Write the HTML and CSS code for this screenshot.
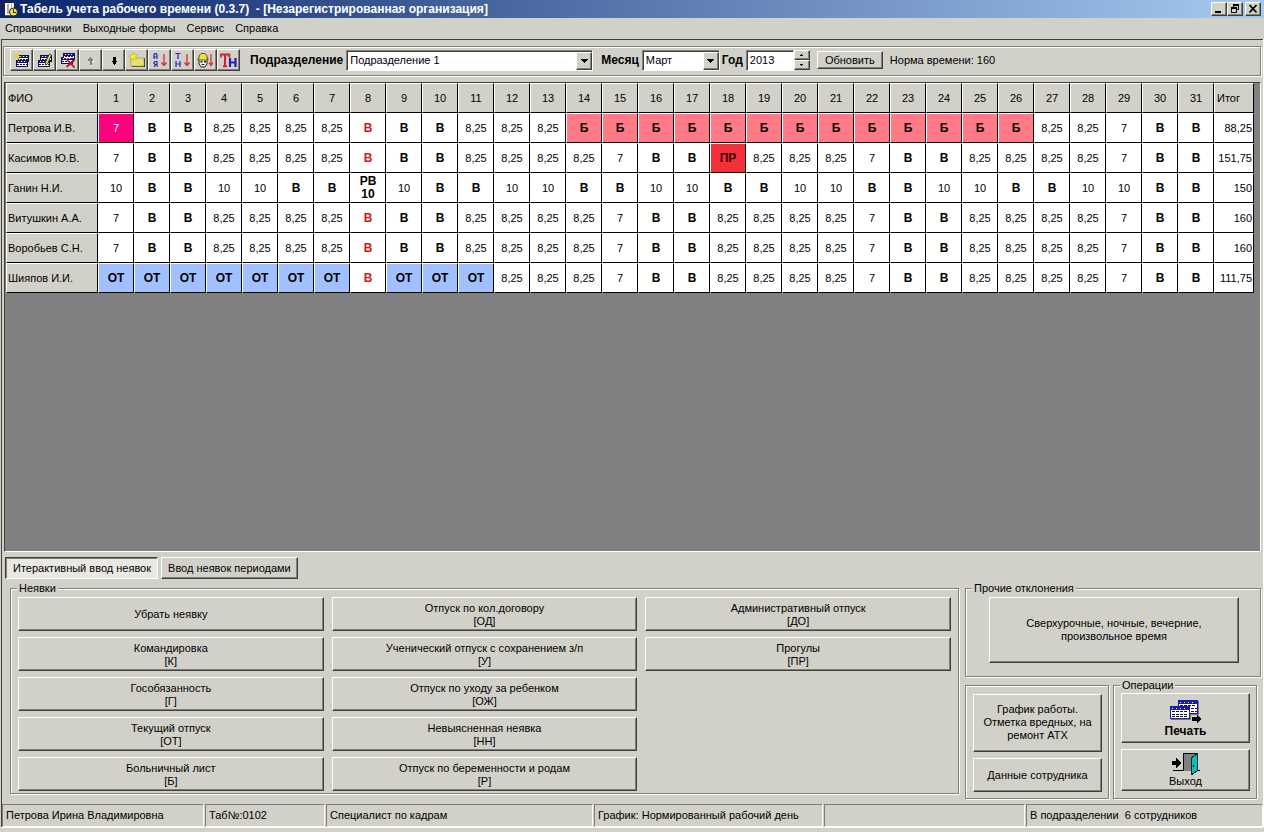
FILE: index.html
```
<!DOCTYPE html>
<html lang="ru">
<head>
<meta charset="utf-8">
<title>Табель учета рабочего времени</title>
<link rel="stylesheet" href="styles.css">
</head>
<body>
<header class="titlebar">
  <svg class="app-icon" viewBox="0 0 16 16" shape-rendering="crispEdges"><path fill="#fff" d="M3 2h9v12H3z"/><path fill="#223" d="M1 2h2v12H1zM3 1h7v1H3z"/><path fill="#aab" d="M5 3h2v10H5zM9 3h1v5H9z"/><path fill="#555" d="M3 14h6v1H3z"/><circle cx="11.5" cy="11" r="4" fill="#f4ea3c" stroke="#222" shape-rendering="auto"/><path fill="#222" d="M11 8h1v4h-1zM11 11h3v1h-3z"/></svg>
  <h1 class="title">Табель учета рабочего времени (0.3.7) &nbsp;- [Незарегистрированная организация]</h1>
  <div class="win-buttons">
    <button class="bevel win" aria-label="Свернуть"><svg viewBox="0 0 12 10" shape-rendering="crispEdges"><path d="M2 7h6v2H2z"/></svg></button>
    <button class="bevel win" aria-label="Восстановить"><svg viewBox="0 0 12 10" shape-rendering="crispEdges"><path d="M4 0h6v6H8V5h1V2H5v1H4zM2 3h6v6H2zM3 5v3h4V5z" fill-rule="evenodd"/></svg></button>
    <button class="bevel win close" aria-label="Закрыть"><svg viewBox="0 0 12 10"><path d="M2.5 1l7 7.500M9.500 1l-7 7.500" stroke="#000" stroke-width="1.800"/></svg></button>
  </div>
</header>
<nav class="menu">
  <a href="#">Справочники</a><a href="#">Выходные формы</a><a href="#">Сервис</a><a href="#">Справка</a>
</nav>
<main class="workspace">
  <form class="toolbar">
    <div class="tools">
      <button type="button" class="bevel tool" aria-label="Добавить"><svg viewBox="0 0 16 16" shape-rendering="crispEdges"><path fill="#101050" d="M4 3h11v7H4zM2 8h12v7H2z"/><path fill="#fff" d="M5 6h9v2H5zM3 11h10v3H3z"/><path fill="#2a2ad0" d="M5 4h9v1H5zM3 9h10v1H3z"/><path stroke="#fff" stroke-dasharray="1 2" d="M6 4.500h8M4 9.500h9"/><path stroke="#112" stroke-dasharray="2 1" d="M3 12.500h10M6 7.500h8"/><path stroke="#e0d43a" d="M3.500 1v6M0 4.500h7M1 2l5 5M6 2L1 7"/></svg></button>
      <button type="button" class="bevel tool" aria-label="Изменить"><svg viewBox="0 0 16 16" shape-rendering="crispEdges"><path fill="#101050" d="M3 3h12v7H3zM1 8h12v7H1z"/><path fill="#fff" d="M4 6h10v2H4zM2 11h10v3H2z"/><path fill="#2a2ad0" d="M4 4h10v1H4zM2 9h10v1H2z"/><path stroke="#fff" stroke-dasharray="1 2" d="M5 4.500h8M3 9.500h9"/><path stroke="#112" stroke-dasharray="2 1" d="M2 12.500h10M5 7.500h8"/><path shape-rendering="auto" fill="#f0e468" stroke="#222" stroke-width=".8" d="M13 2l2 1-4 9-2 1v-3z"/></svg></button>
      <button type="button" class="bevel tool" aria-label="Удалить"><svg viewBox="0 0 16 16" shape-rendering="crispEdges"><path fill="#101050" d="M3 1h12v7H3zM1 5h12v7H1z"/><path fill="#fff" d="M4 4h10v2H4zM2 8h10v3H2z"/><path fill="#2a2ad0" d="M4 2h10v1H4zM2 6h10v1H2z"/><path stroke="#fff" stroke-dasharray="1 2" d="M5 2.500h8M3 6.500h9"/><path stroke="#112" stroke-dasharray="2 1" d="M2 9.500h10M5 4.500h8"/><path shape-rendering="auto" stroke="#b8141e" stroke-width="1.800" d="M7 7l8 8.500M15 8l-8 7"/></svg></button>
      <button type="button" class="bevel tool" aria-label="Вверх" disabled><svg viewBox="0 0 16 16" shape-rendering="crispEdges"><path fill="#fff" d="M8 6h1v1h1v1h1v2H9v4H8z"/><path fill="#808080" d="M7 5h1v1h1v1h1v2H9v4H7V9H5V7h1V6h1z"/></svg></button>
      <button type="button" class="bevel tool" aria-label="Вниз"><svg viewBox="0 0 16 16" shape-rendering="crispEdges"><path d="M7 5h3v4h1v1h-1v2H9v1H8v-1H7v-2H6V9h1z"/></svg></button>
      <button type="button" class="bevel tool" aria-label="Папка"><svg viewBox="0 0 18 16"><path fill="#222" d="M4 14h13V6h1v9.500H4z"/><path fill="#e6e274" stroke="#8a8a30" stroke-width=".6" d="M3 6h5l2-1 1 1h6v8.500H3z"/><path fill="#f6f02a" stroke="#a8a020" stroke-width=".5" d="M5 0l1.500 2.500L10 2 8 4.500 9 8 5.500 6.500 3 8.500V5.500L.5 4 4 3z"/></svg></button>
      <button type="button" class="bevel tool" aria-label="Сортировка по алфавиту"><svg viewBox="0 0 16 16"><g fill="none" stroke="#2424c0" stroke-width="1.200"><path d="M2.500 7V2.500l1-1h1l1 1V7M2.500 5h3M5.500 15V9.500H3.500l-1 1v1l1 1h2M4 12.500L2.500 15"/></g><path d="M12.500 2v11.500M10 10.500l2.500 3 2.500-3" fill="none" stroke="#d23030" stroke-width="1.300"/></svg></button>
      <button type="button" class="bevel tool" aria-label="Сортировка по табельному номеру"><svg viewBox="0 0 16 16"><g fill="none" stroke="#2424c0" stroke-width="1.200"><path d="M1 1.500h5M3.500 1.500V7M1.500 9v6M5.500 9v6M1.500 12h4"/></g><path d="M12.500 2v11.500M10 10.500l2.500 3 2.500-3" fill="none" stroke="#d23030" stroke-width="1.300"/></svg></button>
      <button type="button" class="bevel tool" aria-label="Сортировка по должности"><svg viewBox="0 0 16 16"><path fill="#f4f0e0" stroke="#222" d="M1.500 7.500h8V12l-2 3h-4l-2-3z"/><path fill="#f4e52c" stroke="#443" stroke-width=".9" d="M1.500 6.500V4l2-2.500h4l2 2.500v2.500h1v1.500H.5V6.500z"/><path fill="#222" d="M3 9h2v1.500H3zM6.500 9h2v1.500h-2zM4 12h3v1H4z"/><path d="M13.500 2v11.500M11.500 10.500l2 3 2-3" fill="none" stroke="#d23030" stroke-width="1.300"/></svg></button>
      <button type="button" class="bevel tool" aria-label="Табельный номер"><svg viewBox="0 0 17 16"><path d="M0 2.500h10M5 2v12.500M.7 2v3.500M9.300 2v3.500M3 14.200h4" fill="none" stroke="#d8202c" stroke-width="2"/><path d="M10 6v9M15.500 6v9M10 10.500h5.500" fill="none" stroke="#2020c0" stroke-width="2.200"/></svg></button>
    </div>
    <label class="field dept" for="dept">Подразделение</label>
    <span class="combo wide"><select id="dept"><option>Подразделение 1</option></select><span class="bevel arrow"><svg viewBox="0 0 7 4" shape-rendering="crispEdges"><path d="M0 0h7v1H6v1H5v1H4v1H3V3H2V2H1V1H0z"/></svg></span></span>
    <label class="field month" for="month">Месяц</label>
    <span class="combo"><select id="month"><option>Март</option></select><span class="bevel arrow"><svg viewBox="0 0 7 4" shape-rendering="crispEdges"><path d="M0 0h7v1H6v1H5v1H4v1H3V3H2V2H1V1H0z"/></svg></span></span>
    <label class="field year" for="year">Год</label>
    <input class="year-box" id="year" type="text" value="2013">
    <span class="spin"><button type="button" class="bevel" aria-label="Больше"><svg viewBox="0 0 3 2" shape-rendering="crispEdges"><path d="M1 0h1v1h1v1H0V1h1z"/></svg></button><button type="button" class="bevel" aria-label="Меньше"><svg viewBox="0 0 3 2" shape-rendering="crispEdges"><path d="M0 0h3v1H2v1H1V1H0z"/></svg></button></span>
    <button type="button" class="bevel refresh">Обновить</button>
    <span>Норма времени: 160</span>
  </form>

  <div class="grid">
    <table>
      <colgroup><col class="c-name"><col class="c-day" span="31"><col class="c-sum"></colgroup>
      <thead><tr><th>ФИО</th><th>1</th><th>2</th><th>3</th><th>4</th><th>5</th><th>6</th><th>7</th><th>8</th><th>9</th><th>10</th><th>11</th><th>12</th><th>13</th><th>14</th><th>15</th><th>16</th><th>17</th><th>18</th><th>19</th><th>20</th><th>21</th><th>22</th><th>23</th><th>24</th><th>25</th><th>26</th><th>27</th><th>28</th><th>29</th><th>30</th><th>31</th><th class="sum">Итог</th></tr></thead>
      <tbody>
        <tr><th>Петрова И.В.</th><td class="selected">7</td><td><b>В</b></td><td><b>В</b></td><td>8,25</td><td>8,25</td><td>8,25</td><td>8,25</td><td class="holiday">В</td><td><b>В</b></td><td><b>В</b></td><td>8,25</td><td>8,25</td><td>8,25</td><td class="sick">Б</td><td class="sick">Б</td><td class="sick">Б</td><td class="sick">Б</td><td class="sick">Б</td><td class="sick">Б</td><td class="sick">Б</td><td class="sick">Б</td><td class="sick">Б</td><td class="sick">Б</td><td class="sick">Б</td><td class="sick">Б</td><td class="sick">Б</td><td>8,25</td><td>8,25</td><td>7</td><td><b>В</b></td><td><b>В</b></td><td>88,25</td></tr>
        <tr><th>Касимов Ю.В.</th><td>7</td><td><b>В</b></td><td><b>В</b></td><td>8,25</td><td>8,25</td><td>8,25</td><td>8,25</td><td class="holiday">В</td><td><b>В</b></td><td><b>В</b></td><td>8,25</td><td>8,25</td><td>8,25</td><td>8,25</td><td>7</td><td><b>В</b></td><td><b>В</b></td><td class="absent">ПР</td><td>8,25</td><td>8,25</td><td>8,25</td><td>7</td><td><b>В</b></td><td><b>В</b></td><td>8,25</td><td>8,25</td><td>8,25</td><td>8,25</td><td>7</td><td><b>В</b></td><td><b>В</b></td><td>151,75</td></tr>
        <tr><th>Ганин Н.И.</th><td>10</td><td><b>В</b></td><td><b>В</b></td><td>10</td><td>10</td><td><b>В</b></td><td><b>В</b></td><td><b>РВ<br>10</b></td><td>10</td><td><b>В</b></td><td><b>В</b></td><td>10</td><td>10</td><td><b>В</b></td><td><b>В</b></td><td>10</td><td>10</td><td><b>В</b></td><td><b>В</b></td><td>10</td><td>10</td><td><b>В</b></td><td><b>В</b></td><td>10</td><td>10</td><td><b>В</b></td><td><b>В</b></td><td>10</td><td>10</td><td><b>В</b></td><td><b>В</b></td><td>150</td></tr>
        <tr><th>Витушкин А.А.</th><td>7</td><td><b>В</b></td><td><b>В</b></td><td>8,25</td><td>8,25</td><td>8,25</td><td>8,25</td><td class="holiday">В</td><td><b>В</b></td><td><b>В</b></td><td>8,25</td><td>8,25</td><td>8,25</td><td>8,25</td><td>7</td><td><b>В</b></td><td><b>В</b></td><td>8,25</td><td>8,25</td><td>8,25</td><td>8,25</td><td>7</td><td><b>В</b></td><td><b>В</b></td><td>8,25</td><td>8,25</td><td>8,25</td><td>8,25</td><td>7</td><td><b>В</b></td><td><b>В</b></td><td>160</td></tr>
        <tr><th>Воробьев С.Н.</th><td>7</td><td><b>В</b></td><td><b>В</b></td><td>8,25</td><td>8,25</td><td>8,25</td><td>8,25</td><td class="holiday">В</td><td><b>В</b></td><td><b>В</b></td><td>8,25</td><td>8,25</td><td>8,25</td><td>8,25</td><td>7</td><td><b>В</b></td><td><b>В</b></td><td>8,25</td><td>8,25</td><td>8,25</td><td>8,25</td><td>7</td><td><b>В</b></td><td><b>В</b></td><td>8,25</td><td>8,25</td><td>8,25</td><td>8,25</td><td>7</td><td><b>В</b></td><td><b>В</b></td><td>160</td></tr>
        <tr><th>Шияпов И.И.</th><td class="leave">ОТ</td><td class="leave">ОТ</td><td class="leave">ОТ</td><td class="leave">ОТ</td><td class="leave">ОТ</td><td class="leave">ОТ</td><td class="leave">ОТ</td><td class="holiday">В</td><td class="leave">ОТ</td><td class="leave">ОТ</td><td class="leave">ОТ</td><td>8,25</td><td>8,25</td><td>8,25</td><td>7</td><td><b>В</b></td><td><b>В</b></td><td>8,25</td><td>8,25</td><td>8,25</td><td>8,25</td><td>7</td><td><b>В</b></td><td><b>В</b></td><td>8,25</td><td>8,25</td><td>8,25</td><td>8,25</td><td>7</td><td><b>В</b></td><td><b>В</b></td><td>111,75</td></tr>
      </tbody>
    </table>
  </div>

  <div class="tabs">
    <button class="bevel tab active">Итерактивный ввод неявок</button>
    <button class="bevel tab">Ввод неявок периодами</button>
  </div>

  <div class="panels">
    <fieldset class="group absences">
      <legend>Неявки</legend>
      <div class="absence-grid">
        <button class="bevel">Убрать неявку</button>
        <button class="bevel">Командировка<br>[К]</button>
        <button class="bevel">Гособязанность<br>[Г]</button>
        <button class="bevel">Текущий отпуск<br>[ОТ]</button>
        <button class="bevel">Больничный лист<br>[Б]</button>
        <button class="bevel">Отпуск по кол.договору<br>[ОД]</button>
        <button class="bevel">Ученический отпуск с сохранением з/п<br>[У]</button>
        <button class="bevel">Отпуск по уходу за ребенком<br>[ОЖ]</button>
        <button class="bevel">Невыясненная неявка<br>[НН]</button>
        <button class="bevel">Отпуск по беременности и родам<br>[Р]</button>
        <button class="bevel">Административный отпуск<br>[ДО]</button>
        <button class="bevel">Прогулы<br>[ПР]</button>
      </div>
    </fieldset>
    <div class="side">
      <fieldset class="group other">
        <legend>Прочие отклонения</legend>
        <button class="bevel">Сверхурочные, ночные, вечерние,<br>произвольное время</button>
      </fieldset>
      <div class="side-row">
        <div class="group staff">
          <button class="bevel schedule">График работы.<br>Отметка вредных, на<br>ремонт АТХ</button>
          <button class="bevel">Данные сотрудника</button>
        </div>
        <fieldset class="group ops">
          <legend>Операции</legend>
          <div class="ops-list">
            <button class="bevel op print"><svg viewBox="0 0 32 24" shape-rendering="crispEdges"><path d="M9 2h20v14H9zM1 8h20v13H1z" fill="#777"/><path d="M8 1h20v14H8z" fill="#1a1ab0"/><path d="M9 5h18v9H9z" fill="#fff"/><path d="M0 7h20v13H0z" fill="#1a1ab0"/><path d="M1 11h18v8H1z" fill="#fff"/><path d="M10 6.500h16M21 9.500h6M21 12.500h6M2 12.500h16M2 15.500h16M2 17.500h16" stroke="#112" stroke-dasharray="3 1"/><path d="M2 9.500h16M10 3.500h16" stroke="#fff" stroke-dasharray="1 3"/><path d="M22 18h5v-2l5 4-5 4v-2h-5z"/></svg><strong>Печать</strong></button>
            <button class="bevel op exit"><svg viewBox="0 0 28 22" shape-rendering="crispEdges"><path d="M1 17.500h10M25 17.500h3M11.500 18V.500h14V18" fill="none" stroke="#000"/><path d="M12 1h13v17H12z" fill="#808080"/><path d="M19 5l6-4v17l-6 4z" fill="#18b8b8" stroke="#033"/><path d="M21 12h1v2h-1z" fill="#000"/><path d="M0 8h4V5l5 5-5 5v-3H0z"/></svg><span>Выход</span></button>
          </div>
        </fieldset>
      </div>
    </div>
  </div>
  <footer class="status">
    <span>Петрова Ирина Владимировна</span><span>Таб№:0102</span><span>Специалист по кадрам</span><span>График: Нормированный рабочий день</span><span></span><span>В подразделении&nbsp; 6 сотрудников</span>
  </footer>
</main>
</body>
</html>
```
FILE: styles.css
```
:root {
  --face: #d2d1c9;
  --light: #fffff8;
  --shade: #808078;
  --dark: #404038;
}
* { box-sizing: border-box; }
body {
  margin: 0;
  min-height: 100vh;
  display: flex;
  flex-direction: column;
  background: var(--face);
  color: #000;
  font: 11px/13px "Liberation Sans", Arial, sans-serif;
}
button, input, select { font: inherit; color: inherit; }
svg { display: block; }

.bevel {
  margin: 0;
  padding: 0;
  background: var(--face);
  border: 1px solid;
  border-color: var(--light) var(--dark) var(--dark) var(--light);
  border-radius: 0;
  box-shadow: inset -1px -1px 0 var(--shade);
}

/* Title and menu */
.titlebar {
  display: flex;
  align-items: center;
  height: 18px;
  padding: 0 3px 0 2px;
  gap: 2px;
  background: linear-gradient(90deg, #0a246a, #a6caf0);
  color: #fff;
}
.app-icon { width: 16px; height: 16px; }
.title { flex: 1; margin: 0; font-size: 12px; line-height: 16px; white-space: nowrap; }
.win-buttons { display: flex; }
.win { display: grid; place-items: center; width: 16px; height: 14px; }
.win svg { width: 12px; height: 10px; }
.close { margin-left: 2px; }
.menu { display: flex; gap: 11px; height: 21px; padding: 4px 5px; }
.menu a { color: inherit; text-decoration: none; }

.workspace {
  flex: 1;
  display: flex;
  flex-direction: column;
  margin: 0 1px 5px;
  border: solid var(--dark);
  border-width: 1px 0 0 1px;
  box-shadow: 0 1px 0 var(--light), 1px 0 0 var(--light);
}

/* Toolbar */
.toolbar {
  display: flex;
  align-items: center;
  height: 30px;
  margin: 6px 2px 0 1px;
  padding: 0 0 2px 6px;
  border: 1px solid var(--shade);
  box-shadow: 1px 1px 0 var(--light), inset 1px 1px 0 var(--light);
}
.tools { display: flex; }
.tool { display: grid; place-items: center; width: 23px; height: 22px; }
.tool svg { width: 17px; height: 16px; }
.field { font-size: 12px; font-weight: bold; white-space: nowrap; margin-right: 3px; }
.dept { margin-left: 10px; }
.month { margin-left: 8px; }
.year { margin-left: 2px; }
.combo { position: relative; width: 78px; }
.combo.wide { width: 247px; }
.combo select, .year-box {
  appearance: none;
  width: 100%;
  height: 21px;
  padding: 0 3px;
  background: #fff;
  border: 1px solid;
  border-color: var(--shade) var(--light) var(--light) var(--shade);
  border-radius: 0;
  box-shadow: inset 1px 1px 0 var(--dark);
}
.combo select { display: block; }
.arrow {
  position: absolute;
  top: 2px;
  right: 1px;
  bottom: 1px;
  width: 16px;
  display: grid;
  place-items: center;
  pointer-events: none;
}
.arrow svg { width: 7px; height: 4px; }
.toolbar .year-box { width: 48px; }
.spin { display: grid; width: 16px; }
.spin .bevel { display: grid; place-items: center; height: 10px; }
.spin svg { width: 3px; height: 2px; }
.refresh { width: 66px; height: 18px; margin: 0 7px 0 7px; }

/* Timesheet */
.grid {
  flex: 1;
  min-height: 300px;
  margin: 6px 2px 0 2px;
  overflow: hidden;
  background: #808080;
  border: 1px solid;
  border-color: var(--dark) var(--light) var(--light) var(--dark);
  padding-left: 1px;
}
table { table-layout: fixed; width: 1248px; border-collapse: separate; border-spacing: 0; }
.c-name { width: 92px; }
.c-day { width: 36px; }
.c-sum { width: 40px; }
th, td {
  height: 30px;
  padding: 0;
  text-align: center;
  font-weight: normal;
  background: #fff;
  border: 1px solid #000;
  border-top-color: #fff;
  border-left-color: #fff;
}
th { background: var(--face); }
th:first-child { text-align: left; padding-left: 1px; }
.sum { text-align: left; padding-left: 2px; }
td:last-child { text-align: right; padding-right: 1px; }
b { font-size: 12px; }
.holiday, .sick, .absent, .leave { font-weight: bold; font-size: 12px; }
.holiday { color: #d01820; }
.selected { background: #ff0080; color: #fff; }
.sick { background: #ff7a86; }
.absent { background: #f4303a; color: #400; }
.leave { background: #a0c0ff; }

/* Lower area */
.tabs { display: flex; gap: 3px; padding: 5px 3px 0; }
.tab { height: 22px; padding: 0 6px; }
.tab.active {
  padding: 1px 6px 0 7px;
  background: #e9e8e3;
  border-color: var(--dark) var(--light) var(--light) var(--dark);
  box-shadow: inset 1px 1px 0 var(--shade);
}
.panels { display: flex; gap: 6px; padding: 3px 2px 0 8px; }
.group {
  min-width: 0;
  margin: 0;
  padding: 0;
  border: 1px solid var(--shade);
  box-shadow: 1px 1px 0 var(--light), inset 1px 1px 0 var(--light);
}
legend { margin-left: 6px; padding: 0 2px; height: 12px; line-height: 12px; background: var(--face); }
.absences { flex: 1; align-self: flex-start; }
.absence-grid {
  display: grid;
  grid-template: repeat(5, 34px) / repeat(3, 1fr);
  grid-auto-flow: column;
  gap: 6px 8px;
  padding: 3px 7px 2px;
}
.absence-grid .bevel { padding-top: 1px; }
.side { width: 296px; display: flex; flex-direction: column; gap: 2px; }
.other { height: 95px; }
.other .bevel { display: block; width: 250px; height: 66px; margin: 3px 0 0 23px; }
.side-row { display: flex; gap: 4px; }
.staff { width: 144px; margin-top: 6px; padding: 8px 6px 6px 7px; display: grid; gap: 6px; grid-template-rows: 58px 34px; }
.staff .schedule { padding-bottom: 2px; }
.ops { width: 144px; }
.ops-list { display: grid; gap: 6px; padding: 2px 6px 6px 7px; grid-template-rows: 50px 42px; }
.op { display: flex; flex-direction: column; align-items: center; justify-content: center; }
.print { gap: 2px; }
.print svg { width: 32px; height: 24px; }
.exit svg { width: 28px; height: 22px; }
strong { font-size: 12px; }

.status {
  display: grid;
  grid-template-columns: 202px 120px 267px 229px 201px 1fr;
  gap: 1px;
  margin-top: 5px;
}
.status span {
  height: 23px;
  padding: 4px 3px;
  border: 1px solid;
  border-color: var(--shade) var(--light) var(--light) var(--shade);
  white-space: nowrap;
}
```
